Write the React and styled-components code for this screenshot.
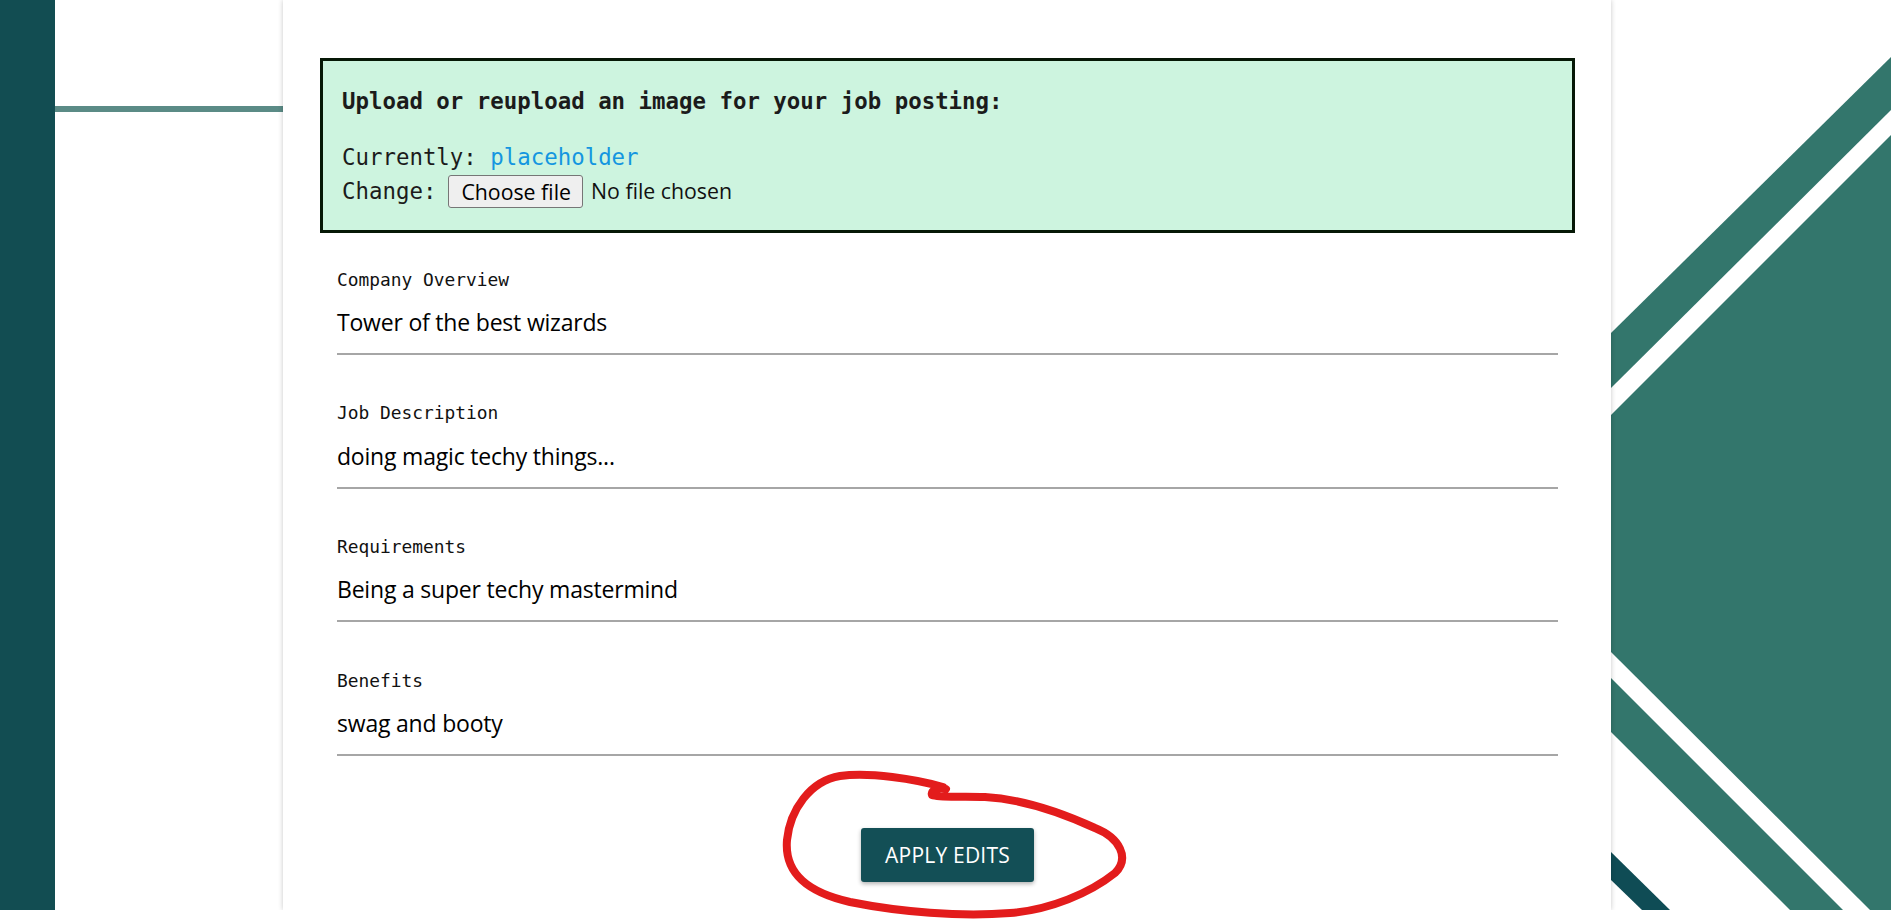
import React from "react";
import styled, { createGlobalStyle } from "styled-components";

const Global = createGlobalStyle`
  html, body { margin: 0; padding: 0; background: #ffffff; }
  body { font-family: "Open Sans", "Noto Sans", sans-serif; color: #111; }
  * { box-sizing: border-box; }
`;

const Root = styled.div`
  position: relative;
  width: 1891px;
  height: 922px;
  overflow: hidden;
  background: #ffffff;
`;

const Page = styled.div`
  display: grid;
  grid-template-columns: 55px 228px 1328px 1fr;
  height: 910px;
`;

const LeftBand = styled.div`
  background: #124d52;
`;

const Gutter = styled.div`
  display: flex;
  flex-direction: column;
  padding-top: 106px;
  background: #ffffff;
`;

const GutterRule = styled.div`
  height: 6px;
  background: #5b8b86;
`;

const Card = styled.main`
  position: relative;
  z-index: 1;
  background: #ffffff;
  box-shadow: 0 0 5px rgba(0, 0, 0, 0.22);
  clip-path: inset(-12px -12px 0 -12px);
  padding: 58px 36px 0 37px;
  display: flex;
  flex-direction: column;
`;

const UploadBox = styled.section`
  background: #cdf4df;
  border: 3px solid #061806;
  padding: 25px 18px 22px 19px;
  font-family: "DejaVu Sans Mono", "Liberation Mono", monospace;
  color: #1b1b1b;
`;

const UploadTitle = styled.h3`
  margin: 0 0 24px;
  font-size: 22.4px;
  line-height: 30px;
  font-weight: 700;
`;

const UploadRow = styled.div`
  display: flex;
  align-items: center;
  height: 34px;
  font-size: 22.4px;
  line-height: 34px;
`;

const MonoText = styled.span`
  white-space: pre;
`;

const FileLink = styled.a`
  color: #1496e0;
  text-decoration: none;
`;

const ChooseButton = styled.button`
  height: 33px;
  margin-left: 12px;
  padding: 0 11px 0 12px;
  border: 1px solid #767676;
  border-radius: 3px;
  background: #efefef;
  color: #000;
  font-family: "Open Sans", "Noto Sans", sans-serif;
  font-size: 21.3px;
  line-height: 31px;
`;

const NoFile = styled.span`
  margin-left: 8px;
  font-family: "Open Sans", "Noto Sans", sans-serif;
  font-size: 21.3px;
  color: #111;
`;

const FieldList = styled.div`
  display: flex;
  flex-direction: column;
  gap: 46.3px;
  padding: 34.8px 17px 0;
`;

const Field = styled.div`
  display: flex;
  flex-direction: column;
  border-bottom: 2px solid #a6a6a6;
  padding-bottom: 15px;
`;

const FieldLabel = styled.label`
  font-family: "DejaVu Sans Mono", "Liberation Mono", monospace;
  font-size: 17.86px;
  line-height: 24px;
  color: #111;
  margin-bottom: 14.3px;
`;

const FieldValue = styled.div`
  font-family: "Open Sans", "Noto Sans", sans-serif;
  font-size: 23px;
  letter-spacing: -0.2px;
  line-height: 32px;
  color: #000;
`;

const Actions = styled.div`
  display: flex;
  justify-content: center;
  padding-top: 72px;
`;

const ApplyButton = styled.button`
  height: 54px;
  padding: 0 24px;
  border: none;
  border-radius: 3px;
  background: #134f56;
  color: #ffffff;
  font-family: "Open Sans", "Noto Sans", sans-serif;
  font-size: 21px;
  line-height: 54px;
  letter-spacing: 0.2px;
  box-shadow: 0 2px 4px rgba(0, 0, 0, 0.3);
`;

const RightPanel = styled.aside`
  background: #ffffff;
`;

const Backdrop = styled.svg`
  display: block;
  width: 280px;
  height: 910px;
`;

const Annotation = styled.svg`
  position: absolute;
  left: 0;
  top: 0;
  width: 1891px;
  height: 922px;
  pointer-events: none;
  z-index: 5;
`;

const fields = [
  { label: "Company Overview", value: "Tower of the best wizards" },
  { label: "Job Description", value: "doing magic techy things..." },
  { label: "Requirements", value: "Being a super techy mastermind" },
  { label: "Benefits", value: "swag and booty" },
];

export default function App() {
  return (
    <Root>
      <Global />
      <Page>
        <LeftBand />
        <Gutter>
          <GutterRule />
        </Gutter>
        <Card>
          <UploadBox>
            <UploadTitle>Upload or reupload an image for your job posting:</UploadTitle>
            <UploadRow>
              <MonoText>Currently: </MonoText>
              <FileLink href="#">placeholder</FileLink>
            </UploadRow>
            <UploadRow>
              <MonoText>Change:</MonoText>
              <ChooseButton type="button">Choose file</ChooseButton>
              <NoFile>No file chosen</NoFile>
            </UploadRow>
          </UploadBox>
          <FieldList>
            {fields.map((f) => (
              <Field key={f.label}>
                <FieldLabel>{f.label}</FieldLabel>
                <FieldValue>{f.value}</FieldValue>
              </Field>
            ))}
          </FieldList>
          <Actions>
            <ApplyButton type="button">APPLY EDITS</ApplyButton>
          </Actions>
        </Card>
        <RightPanel>
          <Backdrop viewBox="0 0 280 910" preserveAspectRatio="none">
            <polygon points="0,333 280,57 280,910 0,910" fill="#33766c" />
            <polygon points="0,388 280,110 280,135 0,415" fill="#ffffff" />
            <polygon points="0,652 259,910 232,910 0,678" fill="#ffffff" />
            <polygon points="0,732 179,910 0,910" fill="#ffffff" />
            <polygon points="0,852 59,910 31,910 0,880" fill="#0f4c55" />
          </Backdrop>
        </RightPanel>
      </Page>
      <Annotation viewBox="0 0 1891 922">
        <path
          d="M 943 787 C 915 779, 870 772, 840 776 C 810 781, 790 810, 787 840 C 784 875, 810 893, 850 902 C 900 912, 960 917, 1010 913 C 1050 910, 1090 893, 1115 873 C 1130 858, 1120 838, 1095 828 C 1060 812, 1020 799, 985 797 C 960 796, 940 798, 932 795 C 930 790, 940 786, 946 789"
          fill="none"
          stroke="#e31c1c"
          strokeWidth="8"
          strokeLinecap="round"
          strokeLinejoin="round"
        />
      </Annotation>
    </Root>
  );
}
